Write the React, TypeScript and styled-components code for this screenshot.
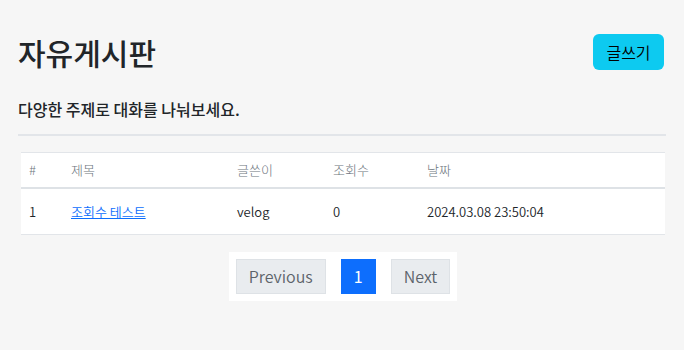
import React from 'react';
import styled, { createGlobalStyle, css } from 'styled-components';

const GlobalStyle = createGlobalStyle`
  html, body {
    margin: 0;
    padding: 0;
    background: #f6f6f6;
    font-family: "Noto Sans CJK KR", "Noto Sans", sans-serif;
    color: #212529;
  }
`;

const Page = styled.div`
  padding: 24px 18px 0;
`;

const Header = styled.div`
  display: flex;
  justify-content: space-between;
  align-items: center;
  height: 56px;
`;

const Title = styled.h1`
  margin: 0;
  font-size: 30px;
  font-weight: 500;
`;

const WriteButton = styled.button`
  width: 71px;
  height: 36px;
  margin-right: 2px;
  border: none;
  border-radius: 6px;
  background: #0dcaf0;
  color: #000;
  font-family: inherit;
  font-size: 16px;
  font-weight: 350;
  padding: 0;
`;

const Subtitle = styled.p`
  margin: 17px 0 0;
  font-size: 16px;
  font-weight: 500;
`;

const Divider = styled.hr`
  margin: 13px 0 16px;
  border: none;
  border-top: 2px solid #e2e5e9;
`;

const Table = styled.table`
  width: calc(100% - 4px);
  margin-left: 3px;
  table-layout: fixed;
  border-collapse: collapse;
  background: #fff;
  font-size: 13px;
  font-weight: 350;
  border-top: 1px solid #e2e5e9;
`;

const HeadCell = styled.th<{ $w?: number }>`
  box-sizing: border-box;
  text-align: left;
  font-weight: 300;
  color: #6c757d;
  height: 35px;
  padding: 0 0 0 8px;
  border-bottom: 2px solid #dee2e6;
  ${p => p.$w !== undefined && css`width: ${p.$w}px;`}
`;

const Cell = styled.td`
  height: 45px;
  padding: 0 0 0 8px;
  border-bottom: 1px solid #e2e5e9;
`;

const TitleLink = styled.a`
  color: #0d6efd;
  text-decoration: underline;
`;

const PaginationWrap = styled.div`
  display: flex;
  justify-content: center;
  margin-top: 17px;
`;

const Pagination = styled.div`
  display: flex;
  align-items: center;
  gap: 15px;
  background: #fff;
  padding: 7px;
  margin-left: 2px;
`;

const PageButton = styled.button<{ $active?: boolean }>`
  height: 35px;
  padding: 0 12px;
  font-family: inherit;
  font-size: 16px;
  font-weight: 350;
  border: 1px solid #dee2e6;
  background: #e9ecef;
  color: #5c636a;
  ${p =>
    p.$active &&
    css`
      background: #0d6efd;
      border-color: #0d6efd;
      color: #fff;
      width: 35px;
      font-weight: 400;
    `}
`;

export default function App(): React.ReactElement {
  return (
    <Page>
      <GlobalStyle />
      <Header>
        <Title>자유게시판</Title>
        <WriteButton>글쓰기</WriteButton>
      </Header>
      <Subtitle>다양한 주제로 대화를 나눠보세요.</Subtitle>
      <Divider />
      <Table>
        <thead>
          <tr>
            <HeadCell $w={42}>#</HeadCell>
            <HeadCell $w={166}>제목</HeadCell>
            <HeadCell $w={96}>글쓴이</HeadCell>
            <HeadCell $w={94}>조회수</HeadCell>
            <HeadCell>날짜</HeadCell>
          </tr>
        </thead>
        <tbody>
          <tr>
            <Cell>1</Cell>
            <Cell>
              <TitleLink href="#">조회수 테스트</TitleLink>
            </Cell>
            <Cell>velog</Cell>
            <Cell>0</Cell>
            <Cell>2024.03.08 23:50:04</Cell>
          </tr>
        </tbody>
      </Table>
      <PaginationWrap>
        <Pagination>
          <PageButton>Previous</PageButton>
          <PageButton $active>1</PageButton>
          <PageButton>Next</PageButton>
        </Pagination>
      </PaginationWrap>
    </Page>
  );
}
